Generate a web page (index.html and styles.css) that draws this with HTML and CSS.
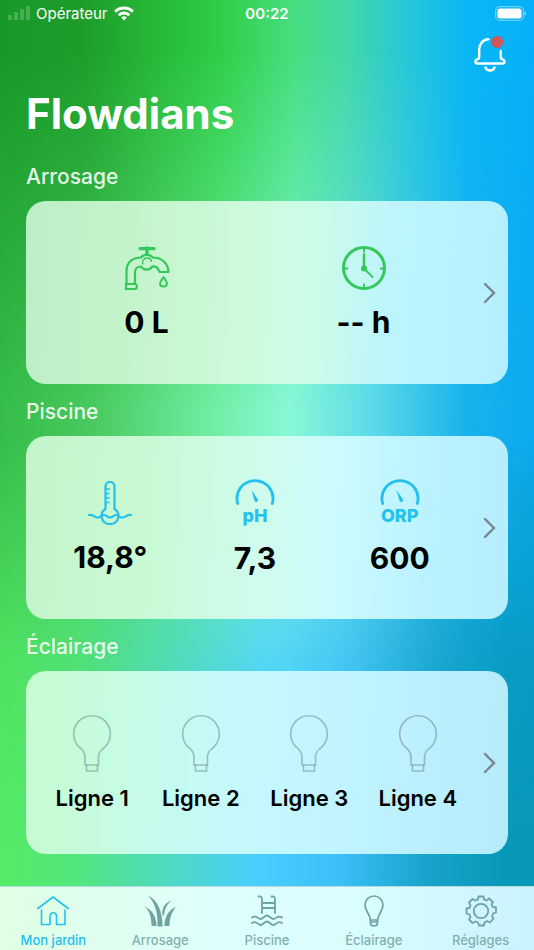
FILE: index.html
```html
<!DOCTYPE html>
<html lang="fr">
<head>
    <meta charset="UTF-8">
    <meta name="viewport" content="width=device-width, initial-scale=1.0">
    <title>Flowdians</title>
    <link rel="stylesheet" href="styles.css">
</head>
<body>
    <!-- Shared icons -->
    <svg class="sprite" aria-hidden="true">
        <symbol id="bulb" viewBox="0 0 40 58">
            <path d="M13 51V43c0-4-1-5.500-3.500-8A18.300 18.300 0 1 1 30.500 35c-3 2.500-4 4-4 8v8z"/>
            <path d="M14.500 51v6H25.500v-6"/>
        </symbol>
        <symbol id="gauge" viewBox="0 0 40 27">
            <path d="M2.700 24.500A18 18 0 1 1 37.300 24.500" fill="none" stroke="currentColor" stroke-width="2.800" stroke-linecap="round"/>
            <path d="M16.500 11l6.500 9.500c1 2-2.500 3.500-3.500 1.500z" fill="currentColor"/>
        </symbol>
        <symbol id="chevron" viewBox="0 0 14 24">
            <path d="M2 3l9 9-9 9"/>
        </symbol>
    </svg>

    <div class="app">
        <div class="backdrop"><div class="layer top"></div><div class="layer middle"></div><div class="layer bottom"></div></div>

        <div class="status-bar">
            <div class="carrier">
                <svg width="22" height="14" viewBox="0 0 22 14" fill="#fff" opacity="0.2">
                    <rect x="0" y="9" width="4" height="5" rx="1"/>
                    <rect x="6" y="6" width="4" height="8" rx="1"/>
                    <rect x="12" y="3" width="4" height="11" rx="1"/>
                    <rect x="18" y="0" width="4" height="14" rx="1"/>
                </svg>
                <span>Opérateur</span>
                <svg width="20" height="15" viewBox="0 0 20 15" fill="none" stroke="#fff" stroke-width="2.900">
                    <path d="M1.200 5.600a12.500 12.500 0 0 1 17.600 0"/>
                    <path d="M4.600 9.200a7.700 7.700 0 0 1 10.800 0"/>
                    <path d="M10 14.500l-2.800-3a4 4 0 0 1 5.600 0z" fill="#fff" stroke="none"/>
                </svg>
            </div>
            <time>00:22</time>
            <div class="battery">
                <svg width="31" height="15" viewBox="0 0 31 15">
                    <rect x="0.700" y="0.700" width="27.600" height="13.600" rx="4" fill="none" stroke="#fff" stroke-opacity="0.400" stroke-width="1.300"/>
                    <rect x="2.500" y="2.500" width="24" height="10" rx="2.500" fill="#fff"/>
                    <path d="M29.500 5v5c2-1 2-4 0-5z" fill="#fff" fill-opacity="0.500"/>
                </svg>
            </div>
        </div>

        <header>
            <button class="bell" aria-label="Notifications">
                <svg width="34" height="38" viewBox="0 0 34 38" fill="none" stroke="#fff" stroke-width="2.400" stroke-linecap="round">
                    <path d="M14.500 3.200C9 3.500 5.200 8 5.200 13.500V21c0 1.700-.7 2.200-2.500 2.700-2 .8-1.700 3.800.5 3.800h25.500c2.200 0 2.500-3 .5-3.800-1.800-.5-2.500-1-2.500-2.700v-6"/>
                    <path d="M11.500 31.500c1.500 4 7.500 4 9 0"/>
                    <circle cx="23.200" cy="6" r="6" fill="#d2555a" stroke="none"/>
                </svg>
            </button>
            <h1>Flowdians</h1>
        </header>

        <main>
            <section>
                <h2>Arrosage</h2>
                <div class="card watering">
                    <div class="items">
                        <div class="item green">
                            <svg width="46" height="44" viewBox="0 0 46 44" fill="none" stroke="currentColor" stroke-width="2.200" stroke-linejoin="round">
                                <path d="M16 2.600h14" stroke-width="3.200" stroke-linecap="round"/>
                                <path d="M23 .5v9" stroke-width="3.500"/>
                                <path d="M2.500 38V25C2.500 16 9 11.500 17 11.500c2.500-3.500 8.500-3.500 12 0 9 0 15 6 15.500 14.500H35.500c-1.500-4.500-4-6-7-5.500-3 4-8.500 4.500-11.500 0-3 0-6 2-6 5.500v12"/>
                                <path d="M2 38h9c2.500 0 2.500 5 0 5H2z"/>
                                <path d="M19 18.500c-1.500-3.500 1-6.500 4-6.500 2.500 0 4.500 1.500 4.500 4" stroke-width="1.300"/>
                                <path d="M39.500 31c-1.500 2.500-3.500 4.500-3.500 6.500 0 4 7 4 7 0 0-2-2-4-3.500-6.500z" stroke-width="1.900"/>
                            </svg>
                            <strong>0 L</strong>
                        </div>
                        <div class="item green">
                            <svg width="44" height="44" viewBox="0 0 44 44" fill="none" stroke="currentColor">
                                <circle cx="22" cy="22" r="20.500" stroke-width="3"/>
                                <path d="M22 3v3.500M22 37.500V41M3 22.500h3M38 22.500h3" stroke-width="1.800"/>
                                <path d="M22 22V8.500" stroke-width="2.500" stroke-linecap="round"/>
                                <path d="M22 22.500l8.500 8.500" stroke-width="1.900" stroke-linecap="round"/>
                                <circle cx="22" cy="22.500" r="3" fill="currentColor" stroke="none"/>
                            </svg>
                            <strong>-- h</strong>
                        </div>
                    </div>
                    <a class="more" href="#arrosage" aria-label="Ouvrir Arrosage"><svg width="14" height="24"><use href="#chevron"/></svg></a>
                </div>
            </section>

            <section>
                <h2>Piscine</h2>
                <div class="card pool">
                    <div class="items">
                        <div class="item blue">
                            <svg width="44" height="44" viewBox="0 0 44 44" fill="none" stroke="currentColor" stroke-width="2.200" stroke-linecap="round">
                                <path d="M17.500 28V5.500a4.500 4.500 0 0 1 9 0V28c7 4.500 4 15-4.500 15s-11.500-10.500-4.500-15z"/>
                                <path d="M18 8h3.500M18 12.500h3M18 17h3.500M18 21.500h3" stroke-width="1.500"/>
                                <path d="M1 34c4-1 5 2.500 9 2.500 3 0 3-2.500 6-2.500 2.500 0 3 2.500 6 2.500s3.500-2.500 6-2.500c3 0 3 2.500 6 2.500 4 0 5-3.500 9-2.500"/>
                            </svg>
                            <strong>18,8°</strong>
                        </div>
                        <div class="item blue">
                            <div class="gauge">
                                <svg width="40" height="27"><use href="#gauge"/></svg>
                                <span>pH</span>
                            </div>
                            <strong>7,3</strong>
                        </div>
                        <div class="item blue">
                            <div class="gauge">
                                <svg width="40" height="27"><use href="#gauge"/></svg>
                                <span>ORP</span>
                            </div>
                            <strong>600</strong>
                        </div>
                    </div>
                    <a class="more" href="#piscine" aria-label="Ouvrir Piscine"><svg width="14" height="24"><use href="#chevron"/></svg></a>
                </div>
            </section>

            <section>
                <h2>Éclairage</h2>
                <div class="card lighting">
                    <div class="items">
                        <button class="item light"><svg width="40" height="58"><use href="#bulb"/></svg><span>Ligne 1</span></button>
                        <button class="item light"><svg width="40" height="58"><use href="#bulb"/></svg><span>Ligne 2</span></button>
                        <button class="item light"><svg width="40" height="58"><use href="#bulb"/></svg><span>Ligne 3</span></button>
                        <button class="item light"><svg width="40" height="58"><use href="#bulb"/></svg><span>Ligne 4</span></button>
                    </div>
                    <a class="more" href="#eclairage" aria-label="Ouvrir Éclairage"><svg width="14" height="24"><use href="#chevron"/></svg></a>
                </div>
            </section>
        </main>

        <nav class="tab-bar">
            <a class="active" href="#jardin">
                <svg viewBox="0 0 32 32" stroke-width="1.600" stroke-linejoin="round">
                    <path d="M.8 13.500L16 2l15.200 11.500"/>
                    <path d="M4.500 15v14.500H13v-8c0-5 6.500-5 6.500 0v8h8.500V15"/>
                </svg>
                <span>Mon jardin</span>
            </a>
            <a href="#arrosage">
                <svg viewBox="0 0 32 32">
                    <g fill="currentColor" stroke="none">
                        <path d="M13.500 31.500C14 19 12 9 4 .5 13.500 5 18.500 16 18.500 31.500z"/>
                        <path d="M18.500 20C17.500 13 21 8 27.500 5.500 22.500 10 21 13 20 20.500z"/>
                        <path d="M7.500 31C7.500 23 6 16 .3 11.500 8.500 15 12.500 22 12.500 31z"/>
                        <path d="M20.500 31c0-9 4-16 11.300-19-4.500 6-6 11-6.500 19z"/>
                    </g>
                </svg>
                <span>Arrosage</span>
            </a>
            <a href="#piscine">
                <svg viewBox="0 0 32 32" stroke-width="1.800">
                    <path d="M7.500 1.500c2.500-.5 3.500.5 3.500 3V18M20.500 1.500c2.500-.5 3.500.5 3.500 3V18M11 8h13M11 13h13"/>
                    <path d="M1 22.500c4.500-3 6 1.500 8.500 1.500s4-3.500 6.500-3.500 4 3.500 6.500 3.500 4-4.500 8.500-1.500"/>
                    <path d="M1 28c4.500-3 6 2 8.500 2s4-3.500 6.500-3.500 4 3.500 6.500 3.500 4-5 8.500-2"/>
                </svg>
                <span>Piscine</span>
            </a>
            <a href="#eclairage">
                <svg viewBox="0 0 32 32" stroke-width="1.700">
                    <path d="M12.500 25c-.5-6-5.500-9-5.500-15a9 9 0 0 1 18 0c0 6-5 9-5.500 15z"/>
                    <path d="M12.500 25v3c0 4 7 4 7 0v-3M13 27h6"/>
                </svg>
                <span>Éclairage</span>
            </a>
            <a href="#reglages">
                <svg viewBox="0 0 32 32" stroke-width="1.800" stroke-linejoin="round">
                    <circle cx="16" cy="16" r="7.200"/>
                    <path d="M13 4.500l.5-3h5l.5 3 2.500 1L24 3.500l4 3.500-1.500 2.500 1.500 2.500 3 .5v5l-3 1-1 2.500 1.500 2.500-3.500 4-3-1.500-2.500 1.500-.5 3h-5l-1-3-2.500-1L7.500 28l-3.500-3.500L5.500 22l-1-2.500-3-1v-5l3-.5 1-2.500L4 7.500 7.500 4 10 5.500z"/>
                </svg>
                <span>Réglages</span>
            </a>
        </nav>
    </div>
</body>
</html>
```
FILE: styles.css
```css
* {
    box-sizing: border-box;
}

body {
    margin: 0;
    font-family: Inter, 'Liberation Sans', sans-serif;
    color: #000;
}

h1, h2 {
    margin: 0;
}

button {
    padding: 0;
    border: none;
    background: none;
    font: inherit;
    color: inherit;
    cursor: pointer;
}

a {
    color: inherit;
    text-decoration: none;
}

svg {
    display: block;
}

.sprite {
    position: absolute;
    width: 0;
    height: 0;
}

.app {
    position: relative;
    display: flex;
    flex-direction: column;
    min-height: 100vh;
    isolation: isolate;
}

/* Background: horizontal gradients that fade into each other down the page */
.backdrop,
.layer {
    position: absolute;
    inset: 0;
}

.backdrop {
    z-index: -1;
    overflow: hidden;
}

.top {
    background: linear-gradient(90deg, #189828 0%, #1d9e2b 16%, #27b836 29%, #30cf48 42%, #46de80 55%, #42d8a8 65%, #28c8d8 76%, #08b6f6 88%, #06b0f8 100%);
}

.middle {
    background: linear-gradient(91deg, #34bc48 0%, #48ca5e 18%, #70eea4 40%, #88f8d8 54%, #60dce8 68%, #18b2ec 86%, #0aa8ee 100%);
    mask-image: linear-gradient(transparent 5%, #000 43%);
}

.bottom {
    background: linear-gradient(91deg, #56ec60 0%, #54e67c 16%, #4cd8c8 35%, #48ceff 50%, #3cc0f8 64%, #18a4cc 80%, #0898b8 94%);
    mask-image: linear-gradient(transparent 46%, rgba(0, 0, 0, 0.8) 70%, #000 90%);
}

/* Status bar */
.status-bar {
    display: grid;
    grid-template-columns: 1fr auto 1fr;
    align-items: center;
    height: 26px;
    padding: 0 8px;
    color: #fff;
    font-size: 15px;
}

.carrier {
    display: flex;
    align-items: center;
    gap: 6px;
}

.status-bar time {
    font-weight: 600;
}

.battery {
    justify-self: end;
}

/* Header */
header {
    display: flex;
    flex-direction: column;
    padding: 10px 26px 0;
}

.bell {
    align-self: flex-end;
}

h1 {
    margin-top: 14px;
    color: #fff;
    font-size: 42px;
    line-height: 52px;
    font-weight: 700;
}

/* Cards */
main {
    flex: 1;
    padding: 9px 26px 32px;
}

h2 {
    padding: 14px 0 10px;
    color: rgba(255, 255, 255, 0.9);
    font-size: 21px;
    line-height: 28px;
    font-weight: 500;
}

.card {
    display: flex;
    min-height: 183px;
    padding-left: 12px;
    border-radius: 20px;
}

.watering {
    background: linear-gradient(93deg, #bdeec8 0%, #c3f3ca 20%, #cdfbdc 46%, #cbfce8 60%, #bef5fc 74%, #b5efff 100%);
}

.pool {
    background: linear-gradient(93deg, #c3f4cb 0%, #c8f9d3 24%, #d0fcee 50%, #c9faff 65%, #bcf2ff 82%, #b5eeff 100%);
}

.lighting {
    background: linear-gradient(92deg, #c6fcd0 0%, #c6fcde 16%, #c5faf6 35%, #c4f7ff 52%, #bdf1ff 76%, #b6ebf9 100%);
}

.items {
    display: flex;
    flex: 1;
    align-items: center;
}

.item {
    display: flex;
    flex: 1;
    flex-direction: column;
    align-items: center;
    gap: 14px;
}

.item strong {
    color: #000;
    font-size: 30px;
    line-height: 36px;
    font-weight: 700;
}

.green {
    color: #34c759;
}

.blue {
    color: #23c1ee;
}

.gauge {
    display: flex;
    flex-direction: column;
    align-items: center;
    font-size: 18px;
    line-height: 20px;
    font-weight: 800;
}

.light {
    gap: 13px;
    font-size: 22px;
    line-height: 26px;
    font-weight: 600;
}

.light svg {
    fill: none;
    stroke: rgba(90, 120, 120, 0.45);
    stroke-width: 1.6;
}

.more {
    display: flex;
    align-items: center;
    justify-content: center;
    width: 36px;
}

.more svg {
    fill: none;
    stroke: #78858c;
    stroke-width: 2.4;
    stroke-linecap: round;
}

/* Tab bar */
.tab-bar {
    display: flex;
    height: 64px;
    border-top: 1px solid #b4dcdc;
    background: linear-gradient(90deg, #e0ffe4 0%, #e0fff4 26%, #dfffff 45%, #d8fdff 70%, #caf2ff 100%);
}

.tab-bar a {
    display: flex;
    flex: 1;
    flex-direction: column;
    align-items: center;
    padding-top: 8px;
    color: #82b0ae;
    font-size: 13px;
    line-height: 18px;
    font-weight: 500;
}

.tab-bar svg {
    width: 32px;
    height: 32px;
    margin-bottom: 4px;
    fill: none;
    stroke: currentColor;
    stroke-linecap: round;
    color: #6fa3a1;
}

.tab-bar .active,
.tab-bar .active svg {
    color: #23c1ee;
}
```
